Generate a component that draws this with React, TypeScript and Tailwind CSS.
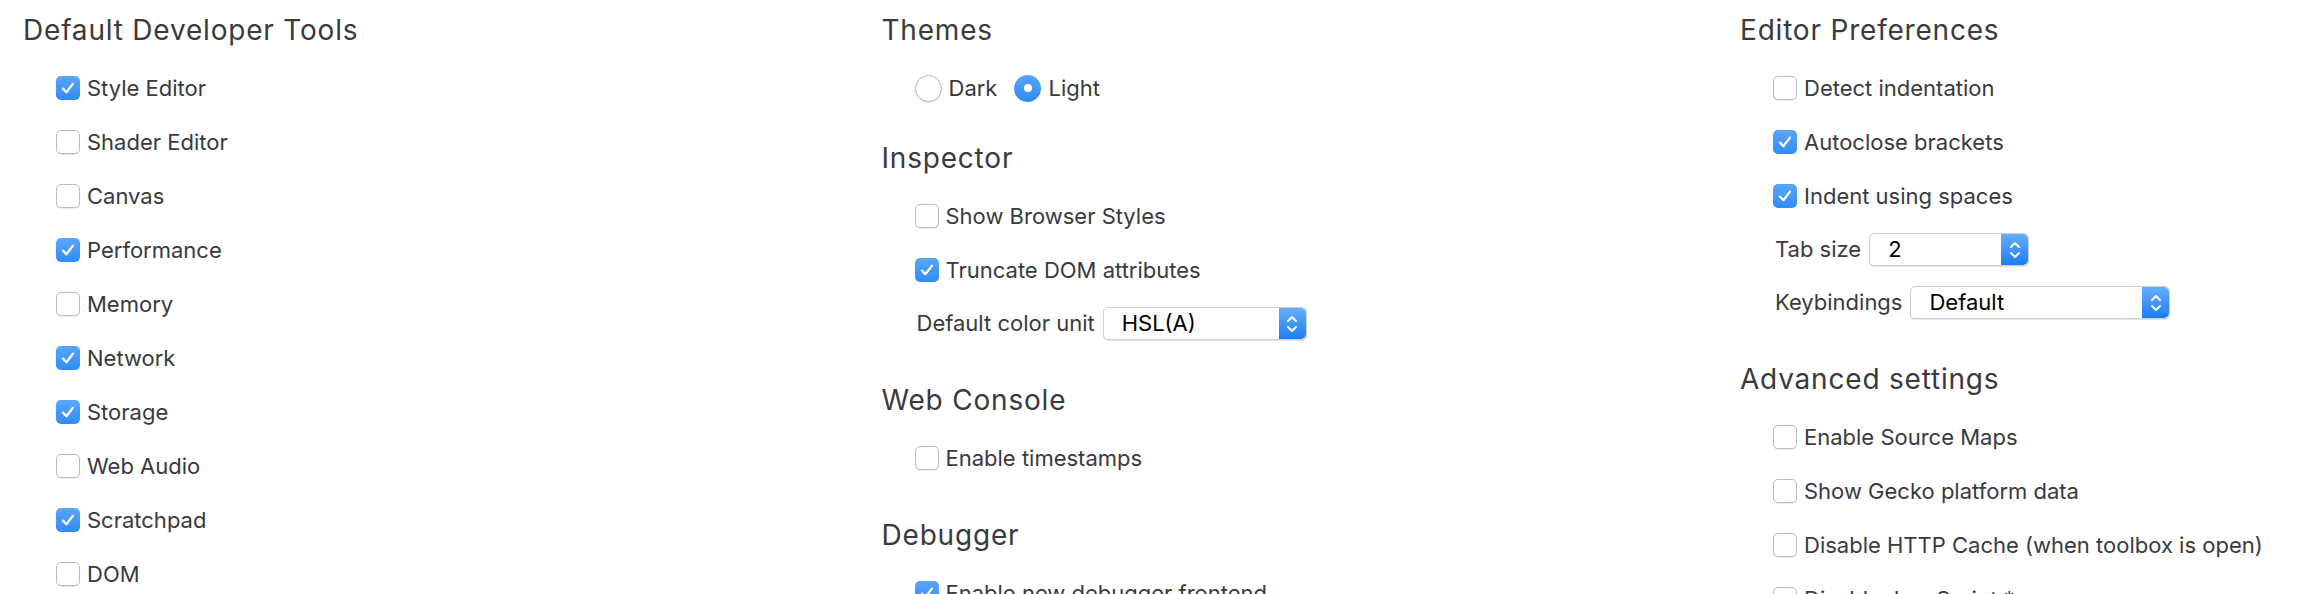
import React from 'react';

type Row =
  | { kind: 'check'; label: string; checked?: boolean }
  | { kind: 'radio'; options: { label: string; checked?: boolean }[] }
  | { kind: 'select'; label: string; value: string; width: string };

interface Section {
  title: string;
  rows: Row[];
  tight?: boolean;
}

const columns: Section[][] = [
  [
    {
      title: 'Default Developer Tools',
      rows: [
        { kind: 'check', label: 'Style Editor', checked: true },
        { kind: 'check', label: 'Shader Editor' },
        { kind: 'check', label: 'Canvas' },
        { kind: 'check', label: 'Performance', checked: true },
        { kind: 'check', label: 'Memory' },
        { kind: 'check', label: 'Network', checked: true },
        { kind: 'check', label: 'Storage', checked: true },
        { kind: 'check', label: 'Web Audio' },
        { kind: 'check', label: 'Scratchpad', checked: true },
        { kind: 'check', label: 'DOM' },
      ],
    },
  ],
  [
    {
      title: 'Themes',
      rows: [
        {
          kind: 'radio',
          options: [{ label: 'Dark' }, { label: 'Light', checked: true }],
        },
      ],
    },
    {
      title: 'Inspector',
      tight: true,
      rows: [
        { kind: 'check', label: 'Show Browser Styles' },
        { kind: 'check', label: 'Truncate DOM attributes', checked: true },
        { kind: 'select', label: 'Default color unit', value: 'HSL(A)', width: 'w-[204px]' },
      ],
    },
    {
      title: 'Web Console',
      rows: [{ kind: 'check', label: 'Enable timestamps' }],
    },
    {
      title: 'Debugger',
      rows: [{ kind: 'check', label: 'Enable new debugger frontend', checked: true }],
    },
  ],
  [
    {
      title: 'Editor Preferences',
      rows: [
        { kind: 'check', label: 'Detect indentation' },
        { kind: 'check', label: 'Autoclose brackets', checked: true },
        { kind: 'check', label: 'Indent using spaces', checked: true },
        { kind: 'select', label: 'Tab size', value: '2', width: 'w-[160px]' },
        { kind: 'select', label: 'Keybindings', value: 'Default', width: 'w-[260px]' },
      ],
    },
    {
      title: 'Advanced settings',
      rows: [
        { kind: 'check', label: 'Enable Source Maps' },
        { kind: 'check', label: 'Show Gecko platform data' },
        { kind: 'check', label: 'Disable HTTP Cache (when toolbox is open)' },
        { kind: 'check', label: 'Disable JavaScript *' },
      ],
    },
  ],
];

function CheckBox({ checked }: { checked?: boolean }) {
  if (checked) {
    return (
      <span className="flex h-[24px] w-[24px] shrink-0 items-center justify-center rounded-[5px] bg-gradient-to-b from-[#58a6fa] to-[#2f8cf5]">
        <svg width="16" height="16" viewBox="0 0 16 16" fill="none">
          <path d="M3 8.6 L6.4 12.2 L13 3.6" stroke="white" strokeWidth="2.3" strokeLinecap="round" strokeLinejoin="round" />
        </svg>
      </span>
    );
  }
  return (
    <span className="h-[24px] w-[24px] shrink-0 rounded-[5px] border border-[#bdbdbd] bg-white shadow-[0_1px_1px_rgba(0,0,0,0.08)]" />
  );
}

function Radio({ checked }: { checked?: boolean }) {
  if (checked) {
    return (
      <span className="flex h-[27px] w-[27px] shrink-0 items-center justify-center rounded-full bg-gradient-to-b from-[#55a4fa] to-[#2f8cf5]">
        <span className="h-[8px] w-[8px] rounded-full bg-white" />
      </span>
    );
  }
  return (
    <span className="h-[27px] w-[27px] shrink-0 rounded-full border border-[#b8b8b8] bg-white shadow-[0_1px_1px_rgba(0,0,0,0.1)]" />
  );
}

function Stepper() {
  return (
    <span className="flex h-full w-[27px] shrink-0 items-center justify-center rounded-r-[5px] bg-gradient-to-b from-[#63aefb] to-[#1a7cf6]">
      <svg width="14" height="24" viewBox="0 0 14 24" fill="none">
        <path d="M3 9 L7 5 L11 9" stroke="white" strokeWidth="1.9" strokeLinecap="round" strokeLinejoin="round" />
        <path d="M3 15 L7 19 L11 15" stroke="white" strokeWidth="1.9" strokeLinecap="round" strokeLinejoin="round" />
      </svg>
    </span>
  );
}

function RowView({ row }: { row: Row }) {
  if (row.kind === 'check') {
    return (
      <div className="flex h-[54px] items-center gap-[7px]">
        <CheckBox checked={row.checked} />
        <span className="whitespace-nowrap">{row.label}</span>
      </div>
    );
  }
  if (row.kind === 'radio') {
    return (
      <div className="flex h-[54px] items-center gap-[17px]">
        {row.options.map((o) => (
          <label key={o.label} className="flex items-center gap-[7px]">
            <Radio checked={o.checked} />
            <span>{o.label}</span>
          </label>
        ))}
      </div>
    );
  }
  return (
    <div className="flex h-[53px] items-center gap-[8px] pl-[2px]">
      <span className="whitespace-nowrap">{row.label}</span>
      <div
        className={`flex h-[33px] ${row.width} items-stretch overflow-hidden rounded-[5px] border border-[#cfcfcf] bg-white shadow-[0_1px_1px_rgba(0,0,0,0.12)]`}
      >
        <span className="flex flex-1 items-center pl-[18px] text-black">{row.value}</span>
        <Stepper />
      </div>
    </div>
  );
}

export default function App() {
  return (
    <div className="flex h-[594px] w-full overflow-hidden bg-white pl-[23px] pt-[10px] font-['Inter','Liberation_Sans',sans-serif] text-[22px] text-[#393a3d]">
      {columns.map((col, ci) => (
        <div key={ci} className={`flex shrink-0 flex-col ${ci < 2 ? 'w-[858.5px]' : 'flex-1'}`}>
          {col.map((section, si) => (
            <section key={section.title} className={si === 0 ? '' : section.tight ? 'mt-[23px]' : 'mt-[30px]'}>
              <h2 className="h-[40px] whitespace-nowrap text-[28px] leading-[40px] tracking-[0.8px] text-[#393a3d]">
                {section.title}
              </h2>
              <div className="mt-[11px] pl-[33px]">
                {section.rows.map((row, ri) => (
                  <RowView key={ri} row={row} />
                ))}
              </div>
            </section>
          ))}
        </div>
      ))}
    </div>
  );
}
